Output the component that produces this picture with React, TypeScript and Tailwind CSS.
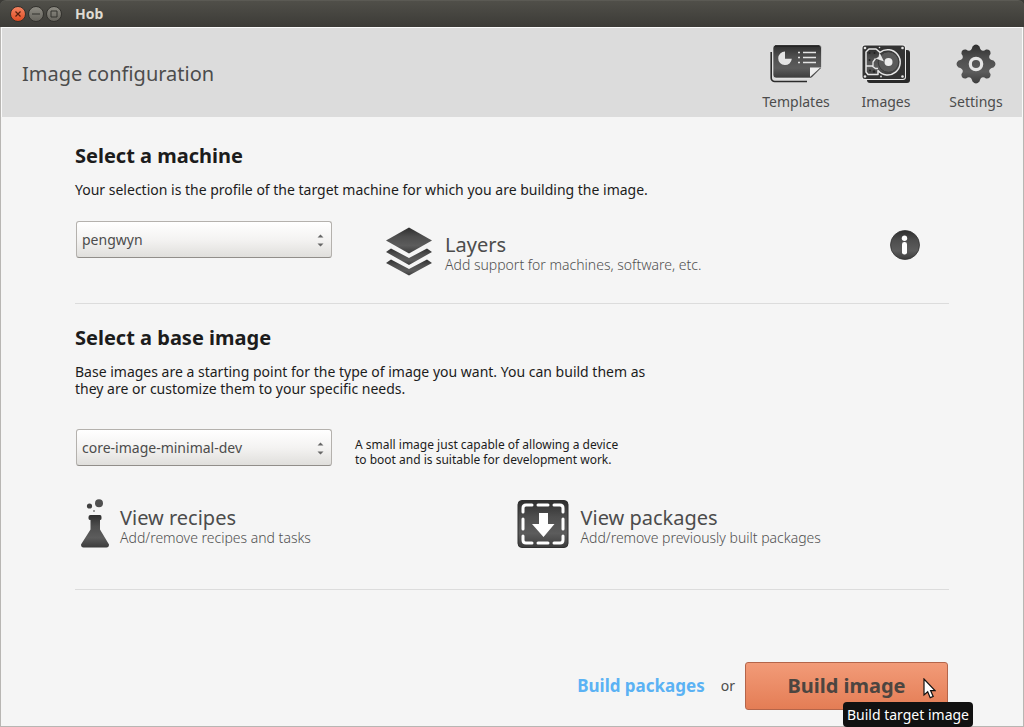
import React from 'react';

function Gradient({ id }: { id: string }) {
  return (
    <defs>
      <linearGradient id={id} x1="0" y1="0" x2="0" y2="1">
        <stop offset="0" stopColor="#2e2e2e" />
        <stop offset="0.35" stopColor="#4e4e4e" />
        <stop offset="0.7" stopColor="#5c5c5c" />
        <stop offset="1" stopColor="#3c3c3c" />
      </linearGradient>
    </defs>
  );
}

function TemplatesIcon() {
  return (
    <svg width="52" height="40" viewBox="0 0 52 40" aria-hidden="true">
      <Gradient id="g-templates" />
      <path d="M1.2 8v26a3.500 3.500 0 0 0 3.500 3.500H37" fill="none" stroke="#2b2b2b" strokeWidth="1.600" />
      <path d="M6 1H48.500a3 3 0 0 1 3 3V23L41 34H6a3 3 0 0 1-3-3V4a3 3 0 0 1 3-3z" fill="url(#g-templates)" stroke="#f0f0f0" strokeWidth="0.600" />
      <path d="M5 2H49.500" stroke="#222" strokeWidth="1.500" />
      <path d="M15 7.500a6.800 6.800 0 1 0 6.800 7.300H15z" fill="#e4e4e4" />
      <path d="M28 8.500h2M28 13.500h2M28 18.500h2M33 8.500h13M33 13.500h13M33 18.500h13" stroke="#e4e4e4" strokeWidth="1.500" />
      <path d="M40 33V23.500h10.500z" fill="#eee" />
      <path d="M50.500 24L41 33.500" stroke="#444" strokeWidth="1" />
    </svg>
  );
}

function DiskIcon() {
  return (
    <svg width="50" height="40" viewBox="0 0 50 40" aria-hidden="true">
      <Gradient id="g-disk" />
      <rect x="6" y="6" width="43" height="33" rx="3" fill="#292929" />
      <rect x="0.500" y="0.500" width="44.500" height="35.500" rx="3" fill="#e8e8e8" />
      <rect x="1.500" y="1.500" width="42.500" height="33.500" rx="2.500" fill="#333" />
      <path d="M5 8L8 5H15L19 8.300A12.600 12.600 0 1 1 17 26.500V30.500H7L5 28z" fill="url(#g-disk)" stroke="#e6e6e6" strokeWidth="1.500" strokeLinejoin="round" />
      <circle cx="27.500" cy="18" r="10.300" fill="#5a5a5a" stroke="#3a3a3a" />
      <path d="M14.500 14.500L23 17.500 18.500 8.500 17.500 13z" fill="#e6e6e6" />
      <path d="M5 22H11L14.500 24.500H17M14.500 14.500L12 18V22" fill="none" stroke="#e6e6e6" strokeWidth="1.300" />
      <circle cx="27.500" cy="18" r="4" fill="#ececec" />
      <g fill="#e6e6e6">
        <circle cx="4" cy="4" r="1.300" /><circle cx="41.500" cy="4" r="1.300" />
        <circle cx="4" cy="32.500" r="1.300" /><circle cx="41.500" cy="32.500" r="1.300" />
        <circle cx="20" cy="32.500" r="0.900" /><circle cx="18.500" cy="3.500" r="0.800" />
      </g>
      <g fill="#222">
        <circle cx="8.500" cy="9" r="1" /><circle cx="13.500" cy="9" r="1" /><circle cx="8.500" cy="16" r="1" />
        <circle cx="9" cy="26.500" r="1" /><circle cx="13" cy="27.500" r="1.200" />
      </g>
    </svg>
  );
}

function GearIcon() {
  return (
    <svg width="40" height="40" viewBox="0 0 40 40" aria-hidden="true">
      <Gradient id="g-gear" />
      <path d="M16.500 2.500Q20-1.500 23.500 2.500C24.500 7 27 8 30 5.500Q35 5 34.500 10C32 13 33 15.500 37.500 16.500Q41.500 20 37.500 23.500C33 24.500 32 27 34.500 30Q35 35 30 34.500C27 32 24.500 33 23.500 37.500Q20 41.500 16.500 37.500C15.500 33 13 32 10 34.500Q5 35 5.500 30C8 27 7 24.500 2.500 23.500Q-1.500 20 2.500 16.500C7 15.500 8 13 5.500 10Q5 5 10 5.500C13 8 15.500 7 16.500 2.500z" fill="url(#g-gear)" />
      <circle cx="20" cy="20" r="5.700" fill="none" stroke="#e4e4e4" strokeWidth="3.200" />
    </svg>
  );
}

function LayersIcon() {
  return (
    <svg width="48" height="50" viewBox="0 -1 48 50" aria-hidden="true">
      <Gradient id="g-layers" />
      <g fill="url(#g-layers)">
        <path d="M1 36L6 32.500 24 42 42 32.500 47 36 24 48.500z" />
        <path d="M1 25L6 21.500 24 31 42 21.500 47 25 24 38z" />
        <path d="M24 0.500L47 13.500 24 26.500 1 13.500z" />
      </g>
    </svg>
  );
}

function InfoIcon() {
  return (
    <svg width="30" height="30" viewBox="0 0 30 30" aria-hidden="true">
      <Gradient id="g-info" />
      <circle cx="15" cy="15" r="14.500" fill="url(#g-info)" stroke="#333" strokeWidth="0.800" />
      <circle cx="14.500" cy="8.200" r="2.700" fill="#fff" />
      <rect x="12" y="12" width="5" height="12.500" rx="2.300" fill="#fff" />
    </svg>
  );
}

function FlaskIcon() {
  return (
    <svg width="30" height="50" viewBox="0 0 30 50" aria-hidden="true">
      <Gradient id="g-flask" />
      <circle cx="9.500" cy="7" r="2.600" fill="#414141" />
      <circle cx="19" cy="4.200" r="4" fill="#505050" />
      <circle cx="14" cy="12" r="0.800" fill="#333" />
      <path d="M10.500 16h9.500q1.500 0 1.500 2v1.500q0 1.500-1.500 1.500v9.500L29 45.500q0 3-2.500 3H3.500q-2.500 0-2.500-3L10.500 30.500V21q-2 0-2-1.500V18q0-2 2-2z" fill="url(#g-flask)" />
    </svg>
  );
}

function PackageIcon() {
  return (
    <svg width="52" height="50" viewBox="0 0 52 50" aria-hidden="true">
      <Gradient id="g-package" />
      <rect x="1" y="1.500" width="50" height="47" rx="4" fill="url(#g-package)" stroke="#303030" />
      <g fill="none" stroke="#fff" strokeWidth="3" strokeLinecap="round">
        <path d="M6 13V9q0-3 3-3h6M21 6h10M37 6h6q3 0 3 3v4M46 20v10M46 37v4q0 3-3 3h-6M31 44H21M15 44H9q-3 0-3-3v-4M6 30V20" />
      </g>
      <path d="M22 14h9v11h6.500L26.500 38 15 25h7z" fill="#fff" />
    </svg>
  );
}

function Cursor() {
  return (
    <svg className="pointer-events-none absolute right-3 top-4" width="13" height="21" viewBox="0 0 13 21" aria-hidden="true">
      <path d="M1 1v16l3.700-3.300 2.500 6 3-1.300-2.600-5.800H12z" fill="#fff" stroke="#111" strokeWidth="1.200" />
    </svg>
  );
}

function HeaderButton({ icon, label, width }: { icon: React.ReactNode; label: string; width: string }) {
  return (
    <button className={`flex flex-col items-center gap-2 whitespace-nowrap text-sm leading-5 text-[#4c4c4c] ${width}`}>
      {icon}
      <span>{label}</span>
    </button>
  );
}

function Dropdown({ label, value, options }: { label: string; value: string; options: string[] }) {
  return (
    <div className="relative h-[37px] w-[257px] shrink-0 pl-px">
      <select
        aria-label={label}
        defaultValue={value}
        className="h-full w-full appearance-none rounded-[3px] border border-[#b4b1ad] border-b-[#918e8a] bg-linear-to-b from-white via-[#f4f3f2] to-[#e0dfdc] px-[5px] text-sm text-[#4c4c4c]"
      >
        {options.map((option) => (
          <option key={option}>{option}</option>
        ))}
      </select>
      <svg className="pointer-events-none absolute right-2 top-3" width="7" height="15" viewBox="0 0 7 15" aria-hidden="true">
        <path d="M0.500 4.500L3.500 1.500l3 3zM0.500 10.500l3 3 3-3z" fill="#666" />
      </svg>
    </div>
  );
}

function ActionButton({ icon, title, detail, gap }: { icon: React.ReactNode; title: string; detail: string; gap: string }) {
  return (
    <button className={`flex items-center text-left ${gap}`}>
      {icon}
      <span className="flex flex-col whitespace-nowrap pt-1">
        <span className="text-xl leading-6 text-[#4c4c4c]">{title}</span>
        <span className="text-sm font-light leading-4 text-[#505050]">{detail}</span>
      </span>
    </button>
  );
}

const heading = 'text-xl font-bold leading-7 text-[#1c1c1c]';

export default function App() {
  return (
    <div className="flex min-h-screen flex-col bg-[#3c3b37] font-['Noto_Sans',sans-serif] text-[#1c1c1c]">
      <header className="flex h-[27px] items-center rounded-t-md border-t border-[#5b5a54] bg-linear-to-b from-[#504f49] to-[#3c3b37] px-2.5">
        <div className="flex gap-0.5">
          <button aria-label="Close" className="grid size-4 place-items-center rounded-full border border-[#36302b] bg-linear-to-b from-[#f58360] to-[#df4b20]">
            <svg width="6" height="6" viewBox="0 0 6 6"><path d="M0.500 0.500l5 5M5.500 0.500l-5 5" stroke="#54200e" strokeWidth="1.200" /></svg>
          </button>
          <button aria-label="Minimize" className="grid size-4 place-items-center rounded-full border border-[#33322e] bg-linear-to-b from-[#8d8b83] to-[#66645d]">
            <svg width="8" height="2" viewBox="0 0 8 2"><path d="M0 1h8" stroke="#33322e" /></svg>
          </button>
          <button aria-label="Maximize" className="grid size-4 place-items-center rounded-full border border-[#33322e] bg-linear-to-b from-[#8d8b83] to-[#66645d]">
            <svg width="8" height="8" viewBox="0 0 8 8"><path d="M1 1h6v6H1z" fill="none" stroke="#33322e" /></svg>
          </button>
        </div>
        <span className="pl-[13px] text-sm font-bold leading-4 text-[#dfdbd2]">Hob</span>
      </header>

      <div className="flex grow flex-col border border-t-0 border-[#b8b6b3] bg-[#f5f5f5]">
        <div className="border border-b-0 border-[#fafafa] bg-[#dcdcdc]">
          <div className="flex h-[89px] items-start justify-between pl-5 pr-2 pt-4">
            <h1 className="pt-4 text-xl leading-7 text-[#4c4c4c]">Image configuration</h1>
            <nav className="flex gap-5">
              <HeaderButton icon={<TemplatesIcon />} label="Templates" width="w-[76px]" />
              <HeaderButton icon={<DiskIcon />} label="Images" width="w-16" />
              <HeaderButton icon={<GearIcon />} label="Settings" width="w-[76px]" />
            </nav>
          </div>
        </div>

        <main className="flex grow flex-col px-[74px] pt-[25px]">
          <section className="border-b border-[#dcdcdc] pb-[27px]">
            <h2 className={heading}>Select a machine</h2>
            <p className="pt-[11px] text-sm leading-[17px]">
              Your selection is the profile of the target machine for which you are building the image.
            </p>
            <div className="flex items-start pt-[23px]">
              <Dropdown label="Machine" value="pengwyn" options={['pengwyn']} />
              <div className="flex grow items-start justify-between pl-[53px] pr-[29px] pt-[5px]">
                <ActionButton icon={<LayersIcon />} title="Layers" detail="Add support for machines, software, etc." gap="gap-3" />
                <button aria-label="Information" className="pt-1">
                  <InfoIcon />
                </button>
              </div>
            </div>
          </section>

          <section className="border-b border-[#dcdcdc] pb-10 pt-5">
            <h2 className={heading}>Select a base image</h2>
            <p className="pt-[11px] text-sm leading-[17px]">
              Base images are a starting point for the type of image you want. You can build them as<br />
              they are or customize them to your specific needs.
            </p>
            <div className="flex items-start gap-[23px] pt-8">
              <Dropdown label="Base image" value="core-image-minimal-dev" options={['core-image-minimal-dev']} />
              <p className="pt-2 text-xs leading-[15px]">
                A small image just capable of allowing a device<br />
                to boot and is suitable for development work.
              </p>
            </div>
            <div className="grid grid-cols-2 gap-x-1 pl-[5px] pt-8">
              <ActionButton icon={<FlaskIcon />} title="View recipes" detail="Add/remove recipes and tasks" gap="gap-2.5" />
              <ActionButton icon={<PackageIcon />} title="View packages" detail="Add/remove previously built packages" gap="gap-3" />
            </div>
          </section>

          <footer className="mt-auto flex items-center justify-end pb-4 pr-px">
            <button className="text-[17px] font-bold leading-6 text-[#5bb2f4]">Build packages</button>
            <span className="pl-4 pr-2.5 text-sm text-[#4c4c4c]">or</span>
            <div className="relative">
              <button
                aria-describedby="build-tip"
                className="h-12 w-[203px] rounded-[3px] border border-[#b4654a] bg-linear-to-b from-[#f29b78] to-[#e47d55] text-xl font-bold text-[#4c4540]"
              >
                Build image
              </button>
              <Cursor />
              <span
                id="build-tip"
                role="tooltip"
                className="absolute -right-[25px] top-10 whitespace-nowrap rounded bg-[#111] px-1 text-sm leading-[25px] text-white"
              >
                Build target image
              </span>
            </div>
          </footer>
        </main>
      </div>
    </div>
  );
}
